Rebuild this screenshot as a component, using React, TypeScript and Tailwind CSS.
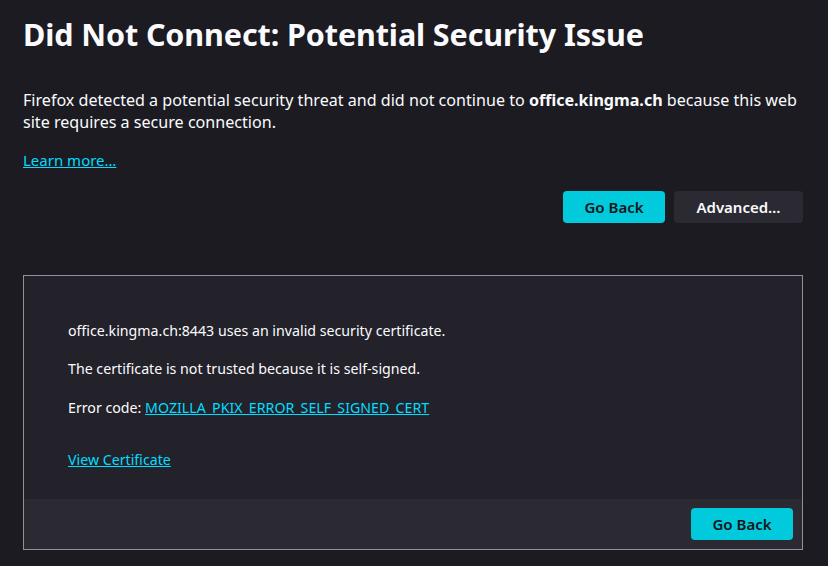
import React from "react";

const font = { fontFamily: '"Noto Sans", "Open Sans", sans-serif' };

export default function App() {
  return (
    <div className="min-h-[566px] w-full bg-[#1c1b22] text-[#fbfbfe]" style={font}>
      <div className="pl-[23px] pr-[25px] pt-[14px]">
        <h1 className="text-[30.5px] font-bold leading-[40px] tracking-[-0.1px]">
          Did Not Connect: Potential Security Issue
        </h1>
        <p className="mt-[35px] text-[16.1px] leading-[22px]">
          Firefox detected a potential security threat and did not continue to{" "}
          <span className="font-bold">office.kingma.ch</span> because this web
          <br />
          site requires a secure connection.
        </p>
        <a href="#" className="mt-[17px] inline-block text-[15px] leading-[20px] text-[#00ddff] underline">
          Learn more…
        </a>
        <div className="mt-[19px] flex justify-end gap-[9px]">
          <button className="h-[32px] w-[102px] rounded-[4px] bg-[#00cadb] text-[15px] font-semibold text-[#15141a]">
            Go Back
          </button>
          <button className="h-[32px] w-[129px] rounded-[4px] bg-[#2b2a33] text-[15px] font-semibold text-[#fbfbfe]">
            Advanced…
          </button>
        </div>
        <div className="mt-[52px] border border-[#8f8f9d] bg-[#23222b]">
          <div className="px-[44px] pt-[45px] pb-[29px] text-[14.2px] leading-[20px]">
            <p>office.kingma.ch:8443 uses an invalid security certificate.</p>
            <p className="mt-[18px]">The certificate is not trusted because it is self-signed.</p>
            <p className="mt-[19px]">
              Error code:{" "}
              <a href="#" className="text-[#00ddff] underline">
                MOZILLA_PKIX_ERROR_SELF_SIGNED_CERT
              </a>
            </p>
            <a href="#" className="mt-[32px] inline-block text-[#00ddff] underline">
              View Certificate
            </a>
          </div>
          <div className="flex justify-end bg-[#2b2a33] px-[9px] py-[9px]">
            <button className="h-[32px] w-[102px] rounded-[4px] bg-[#00cadb] text-[15px] font-semibold text-[#15141a]">
              Go Back
            </button>
          </div>
        </div>
      </div>
    </div>
  );
}
